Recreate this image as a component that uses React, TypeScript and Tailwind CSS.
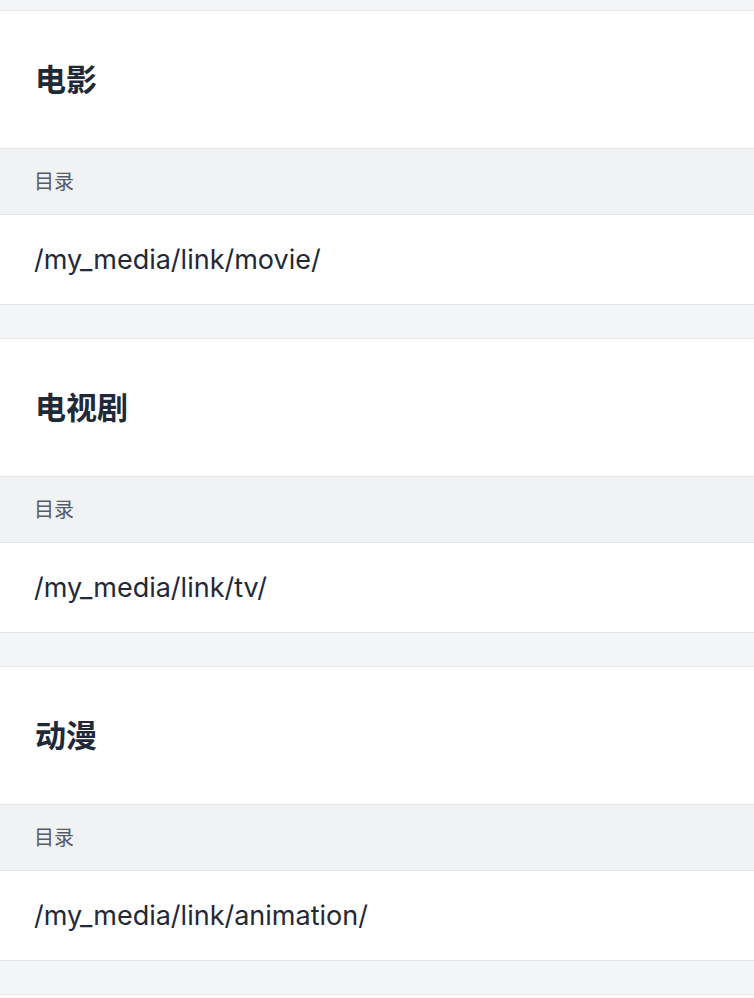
import React from "react";

// Data
const sections = [
    { title: "电影", label: "目录", path: "/my_media/link/movie/" },
    { title: "电视剧", label: "目录", path: "/my_media/link/tv/" },
    { title: "动漫", label: "目录", path: "/my_media/link/animation/" },
];

const font = {
    fontFamily: '"Inter", "Noto Sans CJK SC", sans-serif',
};

const SectionCard = ({ title, label, path }: { title: string; label: string; path: string }) => (
    <div className="bg-white border-y border-[#e4e5e8]">
        <div className="h-[137px] px-[35px] flex items-center">
            <h2 className="text-[31px] font-bold text-[#1f2937] leading-none">{title}</h2>
        </div>
        <div className="h-[66px] px-[34px] flex items-center bg-[#f1f2f4] border-t border-[#e4e5e8]">
            <span className="text-[20px] text-[#555c68] leading-none">{label}</span>
        </div>
        <div className="h-[90px] px-[34px] flex items-center border-t border-[#e4e5e8]">
            <p className="text-[27px] text-[#1f2937] leading-none">{path}</p>
        </div>
    </div>
);

export default function App() {
    return (
        <div className="h-[998px] overflow-hidden bg-[#f4f5f8] pt-[10px] flex flex-col gap-[33px]" style={font}>
            {sections.map((s, i) => (
                <SectionCard key={i} {...s} />
            ))}
            {/* next card, only its top edge is in view */}
            <div className="h-[40px] shrink-0 bg-white border-t border-[#e4e5e8]" />
        </div>
    );
}
